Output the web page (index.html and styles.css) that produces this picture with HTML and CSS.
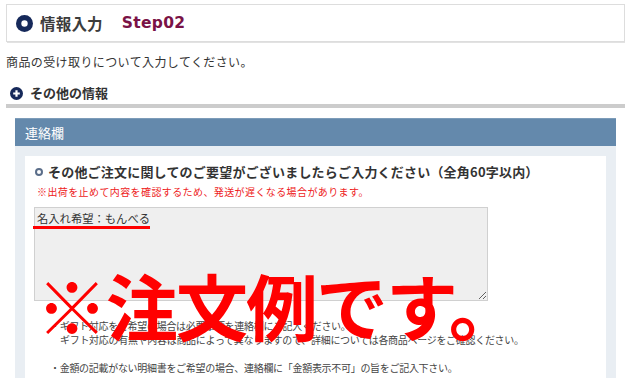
FILE: index.html
```html
<!DOCTYPE html>
<html lang="ja">
<head>
<meta charset="utf-8">
<title>情報入力 Step02</title>
<link rel="stylesheet" href="styles.css">
</head>
<body>
<div class="page">
    <div class="step-head">
        <svg class="ring" width="17" height="17" viewBox="0 0 17 17"><circle cx="8.5" cy="8.5" r="8.5" fill="#16295a"/><circle cx="8.5" cy="8.5" r="3.2" fill="#fff"/></svg>
        <h1>情報入力</h1>
        <span class="step">Step02</span>
    </div>

    <p class="lead">商品の受け取りについて入力してください。</p>

    <h2 class="sub-head">
        <svg class="plus" width="13" height="13" viewBox="0 0 13 13"><circle cx="6.5" cy="6.5" r="6.5" fill="#16295a"/><path d="M6.5 3.2v6.6M3.2 6.5h6.6" stroke="#fff" stroke-width="2.2"/></svg>
        その他の情報
    </h2>

    <div class="contact">
        <div class="contact-title">連絡欄</div>
        <div class="contact-body">
            <div class="panel">
                <h3 class="q"><span class="dot"></span>その他ご注文に関してのご要望がございましたらご入力ください（全角60字以内）</h3>
                <p class="warn">※出荷を止めて内容を確認するため、発送が遅くなる場合があります。</p>
                <div class="field">
                    <textarea class="memo" readonly>名入れ希望：もんべる</textarea>
                    <span class="mark"></span>
                </div>
                <ul class="notes">
                    <li>・ギフト対応をご希望の場合は必要事項を連絡欄にご記入ください。<br>ギフト対応の有無や内容は商品によって異なりますので、詳細については各商品ページをご確認ください。</li>
                    <li>・金額の記載がない明細書をご希望の場合、連絡欄に「金額表示不可」の旨をご記入下さい。</li>
                </ul>
            </div>
        </div>
    </div>

    <div class="stamp">※注文例です。</div>
</div>
</body>
</html>
```

FILE: styles.css
```css
*{
	margin:0;
	padding:0;
	list-style:none;
	box-sizing:border-box;
}
body{
	font-family:"Noto Sans CJK JP", "Noto Sans", sans-serif;
	color:#333;
	background:#fff;
}
.page{
	position:relative;
	width:619px;
	margin-left:6px;
	padding-top:4px;
	height:378px;
	overflow:hidden;
}

/* step header */
.step-head{
	height:38px;
	border:1px solid #ddd;
	box-shadow:1px 1px 0 #e2e2e2;
	display:flex;
	align-items:center;
	padding-left:9px;
}
.step-head .ring{
	flex:none;
}
.step-head h1{
	font-size:15.5px;
	font-weight:bold;
	color:#3c3c3c;
	margin-left:7px;
	letter-spacing:0.2px;
}
.step{
	font-family:"DejaVu Sans", sans-serif;
	font-weight:bold;
	font-size:15.5px;
	color:#7a1246;
	margin-left:19px;
	letter-spacing:0.3px;
}

.lead{
	font-size:12px;
	letter-spacing:0.4px;
	line-height:18px;
	margin-top:11px;
}

/* sub heading */
.sub-head{
	display:flex;
	align-items:center;
	font-size:13px;
	font-weight:bold;
	line-height:18px;
	margin-top:13px;
	padding-left:4px;
	padding-bottom:2px;
	border-bottom:4px solid #ccc;
	color:#333;
}
.sub-head .plus{
	margin-right:7px;
}

/* contact block */
.contact{
	margin:10px 9px 0;
}
.contact-title{
	height:28px;
	line-height:28px;
	background:#6489ac;
	border-top:1px solid #7d9cb9;
	color:#fff;
	font-size:13px;
	padding-left:10px;
}
.contact-body{
	background:#e9eef3;
	padding:10px 10px 0;
}
.panel{
	background:#fff;
	padding:7px 9px 40px;
	height:240px;
}
.q{
	display:flex;
	align-items:center;
	font-size:13px;
	font-weight:bold;
	line-height:18px;
	letter-spacing:0.2px;
	color:#333;
	white-space:nowrap;
}
.q .dot{
	width:8px;
	height:8px;
	border:2.5px solid #5b6e8a;
	border-radius:50%;
	margin:0 5px 0 1px;
	flex:none;
}
.warn{
	font-size:10px;
	letter-spacing:0.4px;
	line-height:14px;
	color:#e22;
	margin-top:4px;
	padding-left:3px;
}
.field{
	position:relative;
	margin-top:8px;
	height:94px;
}
.memo{
	display:block;
	width:454px;
	height:94px;
	background:#efefef;
	border:1px solid #d0d0d0;
	padding:2px;
	font-family:"Noto Sans CJK JP", sans-serif;
	font-size:11.3px;
	line-height:16px;
	color:#333;
	outline:none;
	resize:both;
}
.mark{
	position:absolute;
	left:-1px;
	top:19px;
	width:117px;
	height:3px;
	background:#f00;
}
.notes{
	margin-top:18px;
	padding-left:16px;
	font-size:10px;
	letter-spacing:-0.3px;
	line-height:14px;
	color:#444;
}
.notes li{
	padding-left:10px;
	text-indent:-10px;
	margin-bottom:14px;
}

/* overlay */
.stamp{
	position:absolute;
	left:30px;
	top:268px;
	font-size:72px;
	line-height:1;
	font-weight:bold;
	color:#f00;
	letter-spacing:-2px;
	white-space:nowrap;
}
```
